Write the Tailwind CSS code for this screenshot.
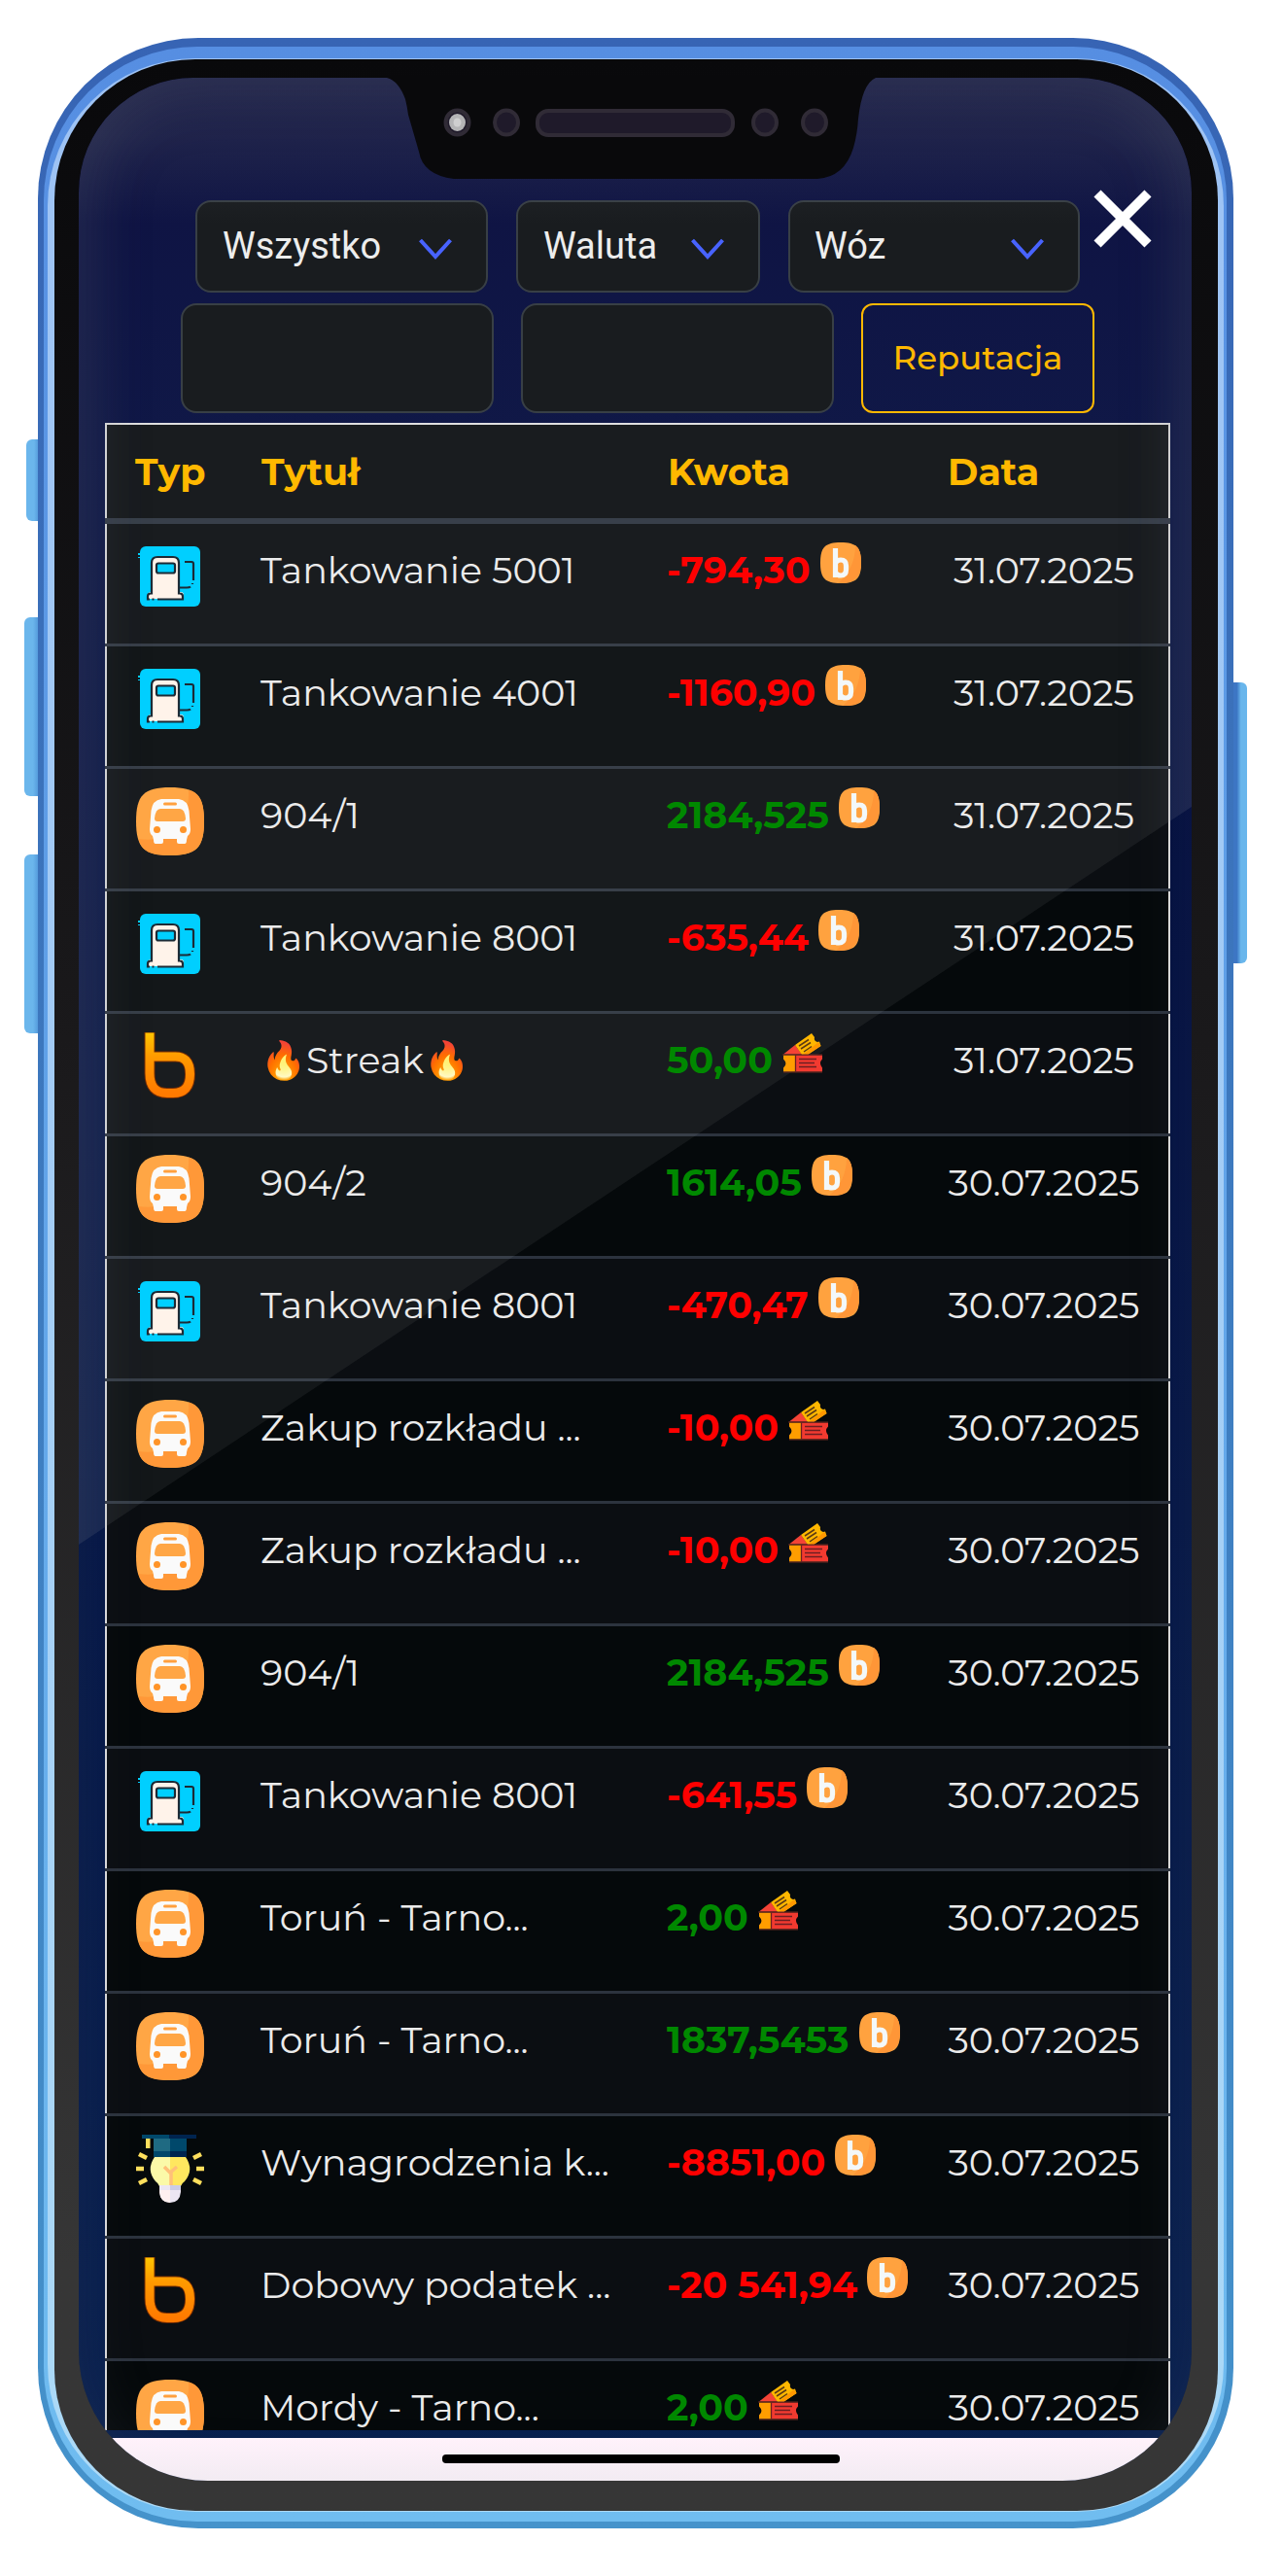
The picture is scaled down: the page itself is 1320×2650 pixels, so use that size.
<!DOCTYPE html>
<html lang="pl">
<head>
<meta charset="UTF-8">
<meta name="viewport" content="width=device-width, initial-scale=1.0">
<title>Historia transakcji</title>
<script src="https://cdn.jsdelivr.net/npm/@tailwindcss/browser@4"></script>
</head>
<body class="bg-white font-[Montserrat,Inter,sans-serif]">

<!-- Icons -->
<svg class="absolute w-0 h-0">
  <defs>
    <linearGradient id="amber" x1="0" y1="0" x2="0" y2="1"><stop stop-color="#ffc400"/><stop offset=".4" stop-color="#ff9a00"/><stop offset="1" stop-color="#ff7a00"/></linearGradient>
  </defs>
  <symbol id="fuel" viewBox="0 0 70 70">
    <rect x="4" y="4" width="62" height="62" rx="6" fill="#00cfff"/>
    <path d="M3 11v2M3 15v1" stroke="#00cfff" stroke-width="2"/>
    <path d="M16 51V21q0-6 6-6h16q6 0 6 6v30h2q3 0 3 3v4H12v-4q0-3 4-3z" fill="#fff3ea"/>
    <path d="M22 58.500h26v-3q0-3-3-3h-1V21q0-6-6-6H22q-6 0-6 6v31.500h-1q-3 0-3 3v3h2M16.500 58.500h2" fill="none" stroke="#1d2a35" stroke-width="2.200"/>
    <rect x="21" y="21.500" width="19" height="10" rx="2" fill="#00cfff" stroke="#1d2a35" stroke-width="2.200"/>
    <path d="M45 46.500h7q3 0 4-1M58 42v1M59 39V22q0-2-2-2h-7" fill="none" stroke="#1d2a35" stroke-width="2.200"/>
  </symbol>
  <symbol id="bus" viewBox="0 0 70 70">
    <path d="M35 0C62 0 70 8 70 35S62 70 35 70 0 62 0 35 8 0 35 0z" fill="#ffa645"/>
    <path d="M54 2.500C66 6 70 15 70 35c0 27-8 35-35 35C15 70 6 66 2.500 53 30 58 56 40 54 2.500z" fill="#ff9838"/>
    <path d="M26 12h18q9 1 10.500 12L56 43q0 5-3 7l-1 4q0 4-2 4h-6q-2 0-2-2v-3H28v3q0 2-2 2h-6q-2 0-2-4l-1-4q-3-2-3-7l1.500-19Q17 13 26 12z" fill="#fafafa"/>
    <rect x="28" y="15.500" width="14" height="3" rx="1.500" fill="#ffa03e"/>
    <path d="M25 22h20q5 0 6 10 0 3-3 3H22q-3 0-3-3 1-10 6-10z" fill="#ffa645"/>
    <circle cx="21.500" cy="43.500" r="3.500" fill="#ff9428"/>
    <circle cx="48.500" cy="43.500" r="3.500" fill="#ff9428"/>
  </symbol>
  <symbol id="brand" viewBox="0 0 70 70">
    <path d="M14 0v42q0 20.500 18 20.500h6Q55.500 62.500 55.500 43T38 25H14" fill="none" stroke="#7a2d00" stroke-width="11"/>
    <path d="M14 .5V42q0 20.500 18 20.500h6Q55.500 62.500 55.500 43T38 25H14" fill="none" stroke="url(#amber)" stroke-width="9"/>
  </symbol>
  <symbol id="idea" viewBox="0 0 70 70">
    <path d="M6 0h28v4H6z" fill="#00486b"/><path d="M34 0h28v4H34z" fill="#00244f"/>
    <path d="M10 4h4.500v10H10z" fill="#ffdf5d"/>
    <path d="M18 4h17v14H18z" fill="#1f6a82"/><path d="M35 4h17v14H35z" fill="#00486b"/>
    <path d="M18 17h17v6H18z" fill="#00486b"/><path d="M35 17h17v6H35z" fill="#00244f"/>
    <path d="M19 23h16v30H24q-1-3-4-5-10-12-1-25z" fill="#fbf9a8"/>
    <path d="M35 23h16q9 13-1 25-3 2-4 5H35z" fill="#ffe75f"/>
    <path d="M29 33l6 6 7-6M36 38v15" fill="none" stroke="#ffc078" stroke-width="3.500"/>
    <path d="M24 52h22v7q-1 11-11 11T24 59z" fill="#ece6f3"/><path d="M24 57h11v13q-10 0-11-11z" fill="#fff0ef"/><path d="M35 52h11v5H35z" fill="#cccce5"/>
    <path d="M0 35h8M62 35h8M3 20l8 4M67 20l-8 4M3 50l8-4M67 50l-8-4" stroke="#ffdf5d" stroke-width="4.500"/>
  </symbol>
  <symbol id="coin" viewBox="0 0 42 42">
    <path d="M21 0C37 0 42 5 42 21S37 42 21 42 0 37 0 21 5 0 21 0z" fill="#ffa23f"/>
    <path d="M36 3q6 4 6 18 0 21-21 21h-3Q36 27 36 3z" fill="#ff9637"/>
    <path d="M15.500 6v30M15.500 21q2-3 5.500-3 5.500 0 5.500 6v4q0 6-5.500 6-3.500 0-5.500-3" fill="none" stroke="#f3f8fa" stroke-width="5.200"/>
  </symbol>
  <symbol id="ticket" viewBox="0 0 42 42">
    <path d="M1 22.500L13 13l7 9.500z" fill="#f44336"/>
    <path d="M13 13L30 1l3 4q-1 4 3 5l2-.5 1.500 4.500L26 23h-6z" fill="#ffb700"/>
    <path d="M37 10l2.500 4L26 23h-5z" fill="#ff9800"/>
    <path d="M17 14l10-6.500M19 17l10-6.500M22 20l8-5.500" stroke="#5b3a13" stroke-width="1.500"/>
    <path d="M1 23.500h12v17H1v-4q5-4 0-9z" fill="#ff9d00"/>
    <path d="M13 23.500h28v4q-4 4 0 9v4H13z" fill="#f23a30"/>
    <path d="M13.500 23v18M17 27.500h18M17 31.500h16M17 35.500h18" stroke="#6b1f22" stroke-width="1.300"/>
    <path d="M0 23h41M1 41h40" stroke="#6b2a22" stroke-width="1"/>
  </symbol>
</svg>

<div class="relative w-[1320px] h-[2650px] overflow-hidden">

  <!-- Side buttons -->
  <div class="absolute left-[27px] top-[452px] w-[16px] h-[84px] rounded-l-md bg-linear-to-r from-[#6bb6ec] from-50% to-[#4486cf]"></div>
  <div class="absolute left-[25px] top-[635px] w-[18px] h-[184px] rounded-l-md bg-linear-to-r from-[#6bb6ec] from-50% to-[#4486cf]"></div>
  <div class="absolute left-[25px] top-[879px] w-[18px] h-[184px] rounded-l-md bg-linear-to-r from-[#6bb6ec] from-50% to-[#4486cf]"></div>
  <div class="absolute left-[1262px] top-[702px] w-[21px] h-[289px] rounded-r-md bg-linear-to-r from-[#3d76c4] from-50% to-[#69b6ec] to-70%"></div>

  <!-- Phone body -->
  <div class="absolute left-[39px] top-[39px] w-[1230px] h-[2562px] rounded-[165px] bg-linear-to-b from-[#3764b4] to-[#4593cb]"></div>
  <div class="absolute left-[45px] top-[48px] w-[1217px] h-[2546px] rounded-[158px] bg-linear-to-b from-[#568ee2] to-[#70bdf0]"></div>
  <div class="absolute left-[49px] top-[60px] w-[1210px] h-[2524px] rounded-[152px] bg-linear-to-b from-[#9dc2f4] to-[#acdaf7]"></div>
  <div class="absolute left-[56px] top-[61px] w-[1197px] h-[2522px] rounded-[145px] bg-linear-to-b from-[#09090b] via-[#1a191b] via-40% to-[#363636] to-90%"></div>

  <!-- Screen -->
  <div class="absolute left-[81px] top-[80px] w-[1145px] h-[2472px] rounded-t-[118px] rounded-b-[133px] overflow-hidden bg-linear-to-b from-[#000437] via-[#020a3c] via-15% to-[#08204f]">

    <div class="flex flex-col h-[2420px] pt-[126px] pl-[27px] pr-[22px]">
      <div class="flex gap-[29px] pl-[93px] h-[95px] shrink-0 font-[Roboto] text-[38px] text-[#ececec]">
        <div class="flex items-center justify-between w-[301px] pl-[26px] pr-[35px] bg-[#0b0e11] border-2 border-[#2c333a] rounded-2xl">
          <span>Wszystko</span>
          <svg class="w-[34px] h-[24px] mt-[5px]" viewBox="0 0 34 24" fill="none" stroke="#3d5afe" stroke-width="4"><path d="M1.500 3L17 20 32.500 3"/></svg>
        </div>
        <div class="flex items-center justify-between w-[251px] pl-[26px] pr-[35px] bg-[#0b0e11] border-2 border-[#2c333a] rounded-2xl">
          <span>Waluta</span>
          <svg class="w-[34px] h-[24px] mt-[5px]" viewBox="0 0 34 24" fill="none" stroke="#3d5afe" stroke-width="4"><path d="M1.500 3L17 20 32.500 3"/></svg>
        </div>
        <div class="flex items-center justify-between w-[300px] pl-[25px] pr-[35px] bg-[#0b0e11] border-2 border-[#2c333a] rounded-2xl">
          <span>Wóz</span>
          <svg class="w-[34px] h-[24px] mt-[5px]" viewBox="0 0 34 24" fill="none" stroke="#3d5afe" stroke-width="4"><path d="M1.500 3L17 20 32.500 3"/></svg>
        </div>
      </div>
      <div class="flex gap-[28px] mt-[11px] pl-[78px] h-[113px] shrink-0">
        <div class="w-[322px] bg-[#0b0e11] border-2 border-[#2c333a] rounded-2xl"></div>
        <div class="w-[322px] bg-[#0b0e11] border-2 border-[#2c333a] rounded-2xl"></div>
        <button class="relative z-10 w-[240px] text-[34px] font-medium text-[#ffb800] border-[2px] border-[#ffb800] rounded-xl">Reputacja</button>
      </div>

      <!-- Transactions -->
      <div class="mt-[10px] flex-1 overflow-hidden text-[38px] text-[#ebebeb]">
        <div class="h-[104px] border-b-6 border-[#2c343f]">
          <div class="flex items-center h-full border-2 border-b-0 border-[#dedede] bg-[#0b0e12] pl-[29px] font-bold text-[#ffb800]">
            <span class="relative z-10 w-[130px]">Typ</span>
            <span class="relative z-10 w-[418px]">Tytuł</span>
            <span class="relative z-10 w-[288px]">Kwota</span>
            <span class="relative z-10">Data</span>
          </div>
        </div>
        <div id="rows"></div>
      </div>
    </div>

    <div class="absolute z-10 left-0 bottom-0 w-full h-[44px] bg-linear-to-b from-[#fff2fb] to-[#f2ebf2]">
      <div class="mx-auto mt-[17px] w-[409px] h-[9px] rounded-sm bg-black relative left-[6px]"></div>
    </div>

    <!-- Glass glare -->
    <div class="absolute inset-0 rounded-t-[118px] rounded-b-[133px] shadow-[inset_0_0_60px_10px_rgba(90,95,105,0.14)]"></div>
    <div class="absolute inset-0 [clip-path:polygon(0_0,100%_0,100%_750px,0_1509px)]">
      <div class="absolute inset-0 bg-white/6"></div>
      <div class="absolute inset-0 rounded-t-[118px] shadow-[inset_0_0_60px_20px_rgba(90,95,105,0.16)]"></div>
      <div class="absolute inset-x-0 top-0 h-[150px] bg-linear-to-b from-[#5a5f69]/22 from-40% to-transparent"></div>
    </div>
  </div>

  <!-- Notch -->
  <svg class="absolute left-[390px] top-[78px]" width="530" height="108" viewBox="390 78 530 108">
    <path d="M390 78v2h8q12 3 19 22 2 8 3 16l11 38q4 24 36 28h374q28-2 37-32 4-14 5-30 4-36 18-42h19v-2z" fill="#09090b"/>
    <g fill="#1f1a2a" stroke="#302b36" stroke-width="4">
      <ellipse cx="470.500" cy="126" rx="12" ry="12.500"/>
      <ellipse cx="521" cy="126" rx="12" ry="12.500"/>
      <rect x="553" y="114" width="201" height="25" rx="11"/>
      <ellipse cx="787" cy="126" rx="12" ry="12.500"/>
      <ellipse cx="838" cy="126" rx="12" ry="12.500"/>
    </g>
    <ellipse cx="470.500" cy="126" rx="8.500" ry="9" fill="#b4b4b6"/>
    <ellipse cx="470.500" cy="126" rx="4" ry="4.500" fill="#cfcfd0"/>
  </svg>

  <!-- Close -->
  <svg class="absolute left-[1125px] top-[195px]" width="60" height="60" viewBox="0 0 60 60" stroke="#fff" stroke-width="10"><path d="M4 4l52 52M56 4l-52 52"/></svg>
</div>

<script>
  const rows = [
    ['fuel', 'Tankowanie 5001', '-794,30', 'coin', '31.07.2025'],
    ['fuel', 'Tankowanie 4001', '-1160,90', 'coin', '31.07.2025'],
    ['bus', '904/1', '2184,525', 'coin', '31.07.2025'],
    ['fuel', 'Tankowanie 8001', '-635,44', 'coin', '31.07.2025'],
    ['brand', '🔥Streak🔥', '50,00', 'ticket', '31.07.2025'],
    ['bus', '904/2', '1614,05', 'coin', '30.07.2025'],
    ['fuel', 'Tankowanie 8001', '-470,47', 'coin', '30.07.2025'],
    ['bus', 'Zakup rozkładu ...', '-10,00', 'ticket', '30.07.2025'],
    ['bus', 'Zakup rozkładu ...', '-10,00', 'ticket', '30.07.2025'],
    ['bus', '904/1', '2184,525', 'coin', '30.07.2025'],
    ['fuel', 'Tankowanie 8001', '-641,55', 'coin', '30.07.2025'],
    ['bus', 'Toruń - Tarno...', '2,00', 'ticket', '30.07.2025'],
    ['bus', 'Toruń - Tarno...', '1837,5453', 'coin', '30.07.2025'],
    ['idea', 'Wynagrodzenia k...', '-8851,00', 'coin', '30.07.2025'],
    ['brand', 'Dobowy podatek ...', '-20 541,94', 'coin', '30.07.2025'],
    ['bus', 'Mordy - Tarno...', '2,00', 'ticket', '30.07.2025'],
  ];

  document.getElementById('rows').innerHTML = rows.map(([icon, title, amount, unit, date], i) => `
    <div class="h-[126px] border-b-3 border-[#2c333e]">
      <div class="flex items-start h-full border-x-2 border-[#dedede] pl-[30px] pt-[19px] leading-[57px] whitespace-nowrap ${i % 2 ? 'bg-[#05090b]' : 'bg-[#0b0e12]'}">
        <svg class="relative z-10 w-[70px] h-[70px] mr-[58px] shrink-0"><use href="#${icon}"/></svg>
        <span class="relative z-10 w-[418px] shrink-0">${title}</span>
        <span class="relative z-10 flex gap-[10px] w-[289px] shrink-0 font-bold ${amount[0] === '-' ? 'text-[#ff0000]' : 'text-[#008800]'}">${amount}<svg class="w-[42px] h-[42px]"><use href="#${unit}"/></svg></span>
        <span class="relative z-10 w-[198px] text-center shrink-0">${date}</span>
      </div>
    </div>`).join('');
</script>

</body>
</html>
